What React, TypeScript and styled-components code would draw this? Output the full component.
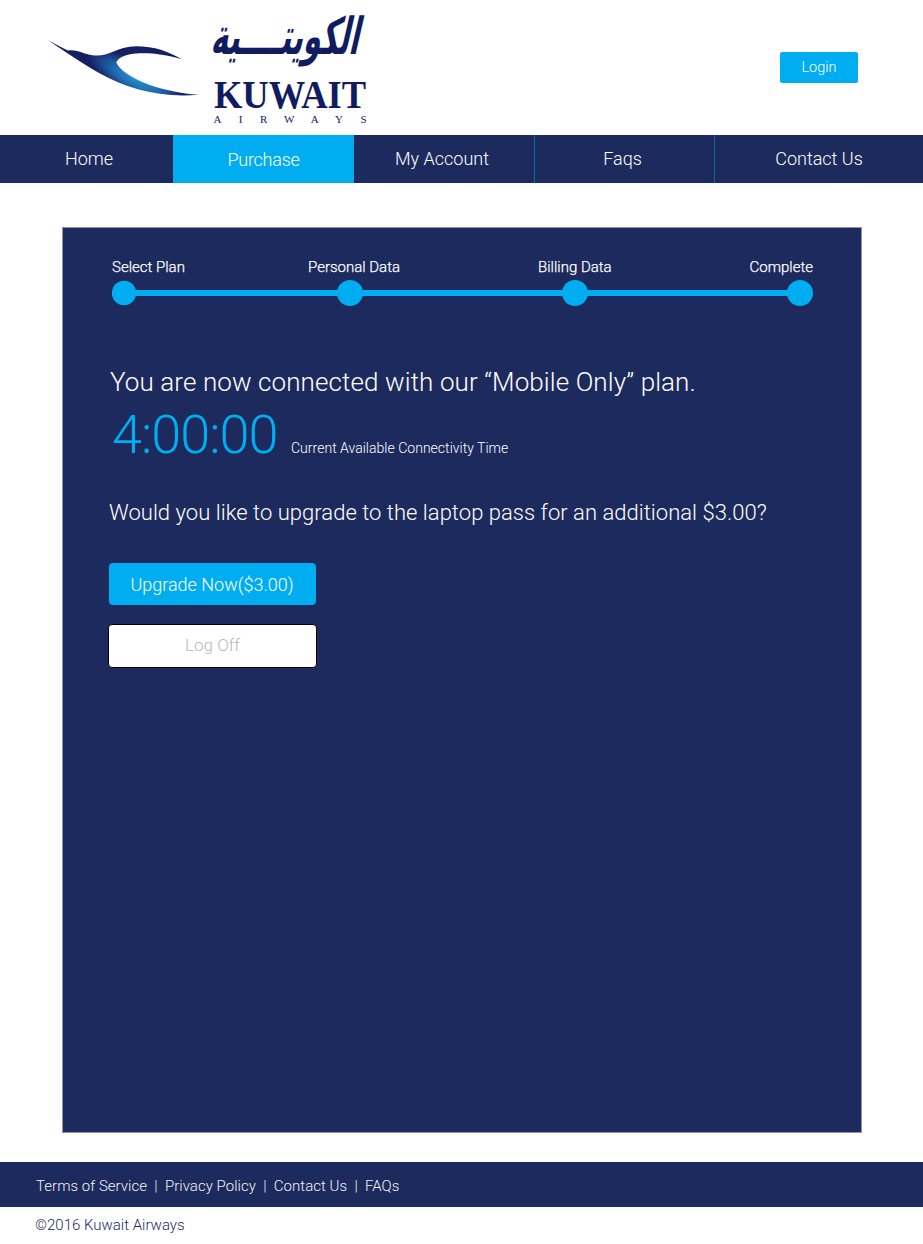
import React from "react";
import styled, { createGlobalStyle } from "styled-components";

const navy = "#1d2a5d";
const sky = "#00adf0";

const Global = createGlobalStyle`
  *, *::before, *::after { box-sizing: border-box; }
  body { margin: 0; background: #fff; font-family: Roboto, "Liberation Sans", sans-serif; font-weight: 300; }
  button { font: inherit; cursor: pointer; padding: 0; }
  p, h1, h2 { margin: 0; font-weight: 300; }
`;

const Page = styled.div`
  width: 923px;
  height: 1244px;
  display: flex;
  flex-direction: column;
  overflow: hidden;
`;

const Header = styled.header`
  height: 135px;
  flex: none;
  display: flex;
  justify-content: space-between;
  align-items: center;
  padding: 0 65px 0 40px;
`;

const LogoArt = styled.svg`
  display: block;
  width: 340px;
  height: 135px;
  overflow: visible;
`;

const LoginButton = styled.button`
  width: 78px;
  height: 31px;
  border: 0;
  border-radius: 2px;
  background: ${sky};
  color: #fff;
  font-size: 14.5px;
  line-height: 31px;
`;

const Nav = styled.nav`
  height: 48px;
  flex: none;
  display: grid;
  grid-template-columns: 173px 181px 181px 180px 208px;
  background: ${navy};
`;

const NavItem = styled.a<{ $active?: boolean; $divided?: boolean; $shift?: number }>`
  display: flex;
  align-items: center;
  justify-content: center;
  padding-left: ${(p) => Math.max(p.$shift ?? 0, 0)}px;
  padding-right: ${(p) => Math.max(-(p.$shift ?? 0), 0)}px;
  padding-bottom: ${(p) => (p.$active ? 0 : 2)}px;
  border-right: ${(p) => (p.$divided ? "1px solid #0568ab" : "0")};
  background: ${(p) => (p.$active ? sky : "transparent")};
  color: #fff;
  font-size: 18px;
  letter-spacing: ${(p) => (p.$active ? "-0.25px" : "0")};
`;

const Panel = styled.main`
  width: 800px;
  height: 906px;
  flex: none;
  margin: 44px 0 0 62px;
  border: 1px solid #8e94ae;
  background: ${navy};
  color: #fff;
  padding: 30px 47px 0 46px;
`;

const StepLabels = styled.div`
  display: grid;
  grid-template-columns: 196px 230px 211.5px auto;
  margin-left: 3px;
  height: 19px;
  font-size: 15px;
  line-height: 19px;
  white-space: nowrap;
  -webkit-text-stroke: 0.25px #fff;
`;

const Track = styled.svg`
  display: block;
  width: 702px;
  height: 28px;
  margin: 1px 0 0 3px;
`;

const Heading = styled.h1`
  margin-top: 60px;
  margin-left: 1px;
  font-size: 26px;
  letter-spacing: 0.09px;
  line-height: 32px;
  white-space: nowrap;
`;

const TimeRow = styled.div`
  display: flex;
  align-items: baseline;
  margin: 4px 0 0 3px;
  height: 66px;
`;

const Time = styled.span`
  width: 179px;
  color: ${sky};
  font-size: 54px;
  letter-spacing: -1px;
  line-height: 66px;
`;

const TimeLabel = styled.span`
  font-size: 14px;
  letter-spacing: 0.02px;
`;

const Question = styled.p`
  margin-top: 31px;
  font-size: 22px;
  letter-spacing: 0.03px;
  line-height: 28px;
  white-space: nowrap;
`;

const Actions = styled.div`
  display: flex;
  flex-direction: column;
  gap: 19px;
  width: 209px;
  margin: 36px 0 0 -1px;
`;

const Action = styled.button<{ $outlined?: boolean }>`
  height: ${(p) => (p.$outlined ? 44 : 42)}px;
  margin: 0 ${(p) => (p.$outlined ? 0 : 1)}px;
  padding: ${(p) => (p.$outlined ? "0 0 3px" : "0 1px 0 0")};
  border: ${(p) => (p.$outlined ? "1px solid #000" : "0")};
  border-radius: 4px;
  background: ${(p) => (p.$outlined ? "#fff" : sky)};
  color: ${(p) => (p.$outlined ? "#b8b8b8" : "#fff")};
  font-size: ${(p) => (p.$outlined ? 17 : 18)}px;
`;

const Footer = styled.footer`
  height: 45px;
  flex: none;
  margin-top: 29px;
  padding: 2px 0 0 36px;
  display: flex;
  align-items: center;
  gap: 7.3px;
  background: ${navy};
  color: #f3f4f8;
  font-size: 15px;
  letter-spacing: 0.03px;
`;

const Copyright = styled.p`
  padding: 9px 0 0 35px;
  color: ${navy};
  font-size: 15px;
  line-height: 18px;
`;

function Logo() {
  return (
    <LogoArt viewBox="40 0 340 135" role="img" aria-label="Kuwait Airways">
      <defs>
        <radialGradient
          id="wing"
          gradientUnits="userSpaceOnUse"
          cx="0"
          cy="0"
          r="1"
          gradientTransform="translate(136 79) rotate(28) scale(54 17)"
        >
          <stop offset="0" stopColor="#2590d2" />
          <stop offset="0.45" stopColor="#1f6db0" />
          <stop offset="1" stopColor="#161f63" />
        </radialGradient>
      </defs>
      <path
        fill="url(#wing)"
        d="M48 40 C54 43.5 62 47.5 68 50.6 C78 49 84 55.2 96 55.6 C110 56 118 46.2 136 46.2 C155 46.2 168 51.5 182 59.2 C166 54.6 153 53 140 53.3 C128 53.7 119 56.5 116.3 62.5 C123 77 158 92 199 94.8 C160 98.5 126 88 100 73.5 C84 64.5 66 52.5 48 40 Z"
      />
      <g fill="#111c60">
        <g transform="translate(210 54) skewX(-13) scale(0.855 1.5)">
          <text x="0" y="0" fontFamily='"DejaVu Sans"' fontWeight="700" fontSize="34">
            الكويتــــية
          </text>
        </g>
        <text x="214" y="108" fontFamily='"Liberation Serif", serif' fontWeight="700" fontSize="40" textLength="152" lengthAdjust="spacingAndGlyphs">
          KUWAIT
        </text>
        <text x="213.5" y="123" fontFamily='"Liberation Serif", serif' fontSize="11" textLength="153" lengthAdjust="spacing">
          AIRWAYS
        </text>
      </g>
    </LogoArt>
  );
}

export default function App() {
  return (
    <Page>
      <Global />
      <Header>
        <Logo />
        <LoginButton>Login</LoginButton>
      </Header>
      <Nav>
        <NavItem $shift={5}>Home</NavItem>
        <NavItem $active>Purchase</NavItem>
        <NavItem $divided $shift={-4}>My Account</NavItem>
        <NavItem $divided $shift={-4}>Faqs</NavItem>
        <NavItem>Contact Us</NavItem>
      </Nav>
      <Panel>
        <StepLabels>
          <span>Select Plan</span>
          <span>Personal Data</span>
          <span>Billing Data</span>
          <span>Complete</span>
        </StepLabels>
        <Track viewBox="0 0 702 28" fill={sky}>
          <rect x="12" y="12" width="676" height="6" />
          <circle cx="12" cy="15" r="12.2" />
          <circle cx="238" cy="15" r="13" />
          <circle cx="463" cy="15" r="13" />
          <circle cx="688" cy="15" r="13" />
        </Track>
        <Heading>You are now connected with our “Mobile Only” plan.</Heading>
        <TimeRow>
          <Time>4:00:00</Time>
          <TimeLabel>Current Available Connectivity Time</TimeLabel>
        </TimeRow>
        <Question>Would you like to upgrade to the laptop pass for an additional $3.00?</Question>
        <Actions>
          <Action>Upgrade Now($3.00)</Action>
          <Action $outlined>Log Off</Action>
        </Actions>
      </Panel>
      <Footer>
        <span>Terms of Service</span>
        <span>|</span>
        <span>Privacy Policy</span>
        <span>|</span>
        <span>Contact Us</span>
        <span>|</span>
        <span>FAQs</span>
      </Footer>
      <Copyright>©2016 Kuwait Airways</Copyright>
    </Page>
  );
}
